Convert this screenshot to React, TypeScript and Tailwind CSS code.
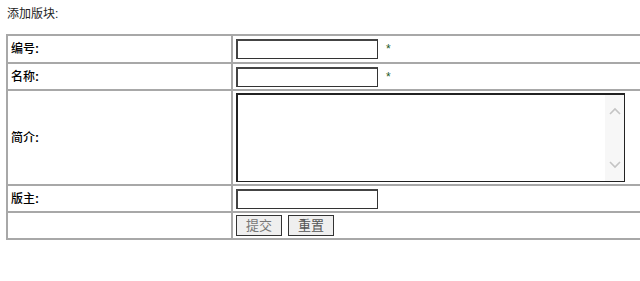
import React from 'react';

const font = { fontFamily: '"Liberation Sans", "Noto Sans CJK SC", sans-serif' };

const cell = 'border-2 border-[#a8a8a8]';
const valueCell = 'border-2 border-r-0 border-[#a8a8a8] pl-[3px]';

function Field({ star }: { star?: boolean }) {
  return (
    <div className="flex items-center">
      <input
        type="text"
        className="w-[142px] h-[20px] bg-white border border-[#333] border-t-2 border-l-2 border-t-[#444] border-l-[#444] outline-none"
      />
      {star && <span className="ml-[8px] text-[12px] text-[#1e5a1e]">*</span>}
    </div>
  );
}

export default function App() {
  return (
    <div className="w-[640px] h-[281px] bg-white overflow-hidden text-[12px] text-black" style={font}>
      <div className="pl-[7px] pt-[5px] h-[34px] text-[#222]">添加版块:</div>
      <table className="ml-[6px] w-[634px] table-fixed border-collapse">
        <colgroup>
          <col className="w-[225px]" />
          <col />
        </colgroup>
        <tbody>
          <tr className="h-[28px]">
            <td className={`${cell} pl-[3px] font-medium`}>编号<b>:</b></td>
            <td className={valueCell}>
              <Field star />
            </td>
          </tr>
          <tr className="h-[27px]">
            <td className={`${cell} pl-[3px] font-medium`}>名称<b>:</b></td>
            <td className={valueCell}>
              <Field star />
            </td>
          </tr>
          <tr className="h-[95px]">
            <td className={`${cell} pl-[3px] font-medium`}>简介<b>:</b></td>
            <td className={valueCell}>
              <div className="flex w-[389px] h-[89px] border border-[#222] border-t-2 border-l-2 bg-white">
                <textarea className="flex-1 resize-none outline-none bg-white" />
                <div className="w-[19px] bg-[#f7f7f7] flex flex-col items-center justify-between py-[12px]">
                  <svg width="12" height="8" viewBox="0 0 12 8">
                    <path d="M1 7 L6 2 L11 7" fill="none" stroke="#c4c4c4" strokeWidth="1.6" />
                  </svg>
                  <svg width="12" height="8" viewBox="0 0 12 8">
                    <path d="M1 1 L6 6 L11 1" fill="none" stroke="#c4c4c4" strokeWidth="1.6" />
                  </svg>
                </div>
              </div>
            </td>
          </tr>
          <tr className="h-[27px]">
            <td className={`${cell} pl-[3px] font-medium`}>版主<b>:</b></td>
            <td className={valueCell}>
              <Field />
            </td>
          </tr>
          <tr className="h-[27px]">
            <td className={cell}></td>
            <td className={valueCell}>
              <div className="flex gap-[6px]">
                <button className="w-[46px] h-[21px] bg-[#efefef] border border-[#333] text-[13px] text-[#777] leading-none">提交</button>
                <button className="w-[46px] h-[21px] bg-[#efefef] border border-[#333] text-[13px] text-[#555] leading-none">重置</button>
              </div>
            </td>
          </tr>
        </tbody>
      </table>
    </div>
  );
}
